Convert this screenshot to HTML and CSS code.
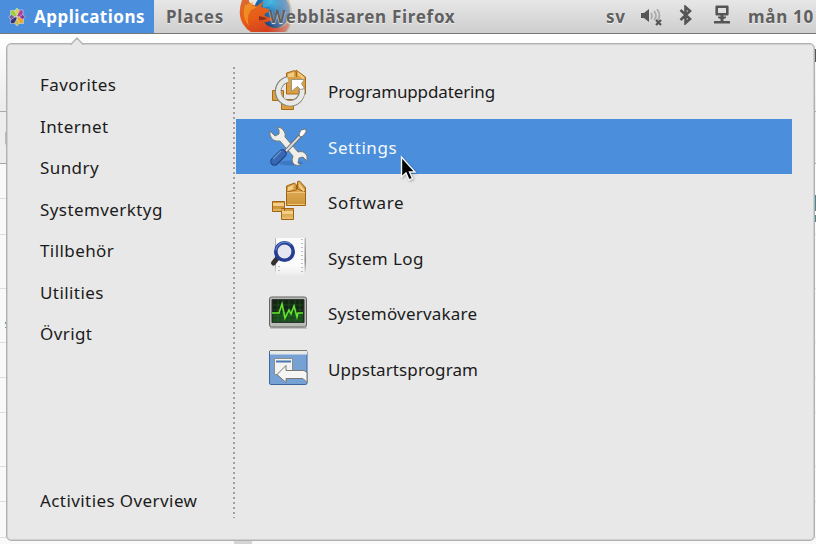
FILE: index.html
```html
<!DOCTYPE html>
<html lang="sv">
<head>
<meta charset="utf-8">
<title>Applications</title>
<link rel="stylesheet" href="styles.css">
</head>
<body>
<div class="desktop">
  <header class="panel">
    <div class="panel-item active">
      <svg class="distro" width="18" height="20" viewBox="0 0 18 20">
        <g stroke="#dfe8f5" stroke-width=".5">
          <path fill="#b23d99" d="M9 10V3h6v7z"/><path fill="#a1cd38" d="M2.500 3.500H9V10H2.500z"/>
          <path fill="#38307d" d="M2.500 10H9v6.500H2.500z"/><path fill="#efa724" d="M9 10h6.500v6.500H9z"/>
          <path fill="#d8d04c" d="M9 1l2.500 3L9 8 6.500 4z"/><path fill="#8d3d99" d="M17.500 10l-3 2.500L11 10l3.500-2.500z"/>
          <path fill="#c9bd48" d="M9 19l-2.500-3L9 12l2.500 4z"/><path fill="#7c5ca4" d="M.5 10l3-2.500L7 10l-3.500 2.500z"/>
        </g>
      </svg>
      <span>Applications</span>
    </div>
    <div class="panel-item places"><span>Places</span></div>
    <div class="window-item">
      <svg class="firefox" width="58" height="32" viewBox="0 0 58 32">
        <defs>
          <radialGradient id="globe" cx=".48" cy=".25" r=".7"><stop offset="0" stop-color="#2cb5e8"/><stop offset=".45" stop-color="#1b6db0"/><stop offset="1" stop-color="#17417d"/></radialGradient>
          <linearGradient id="fox" x1="0" x2=".6" y1="0" y2="1"><stop offset="0" stop-color="#d96b33"/><stop offset=".5" stop-color="#e85e17"/><stop offset="1" stop-color="#cf3c20"/></linearGradient>
          <linearGradient id="fade"><stop offset=".5" stop-color="#fff"/><stop offset="1" stop-color="#fff" stop-opacity=".25"/></linearGradient>
          <mask id="fademask"><path fill="url(#fade)" d="M0 0h58v33H0z"/></mask>
        </defs>
        <g mask="url(#fademask)">
          <path fill="#a99b6d" d="M40 0h10q4 9 3 19-1 8-5 13H25z"/>
          <circle cx="33" cy="11" r="18" fill="url(#globe)"/>
          <path fill="#4eb7dc" d="M24 0h10l-4 6-6 2z" opacity=".6"/>
          <path fill="url(#fox)" d="M3 0Q-2 14 4 24q3 5 8 8h34q5-5 5-12-6 8-13 8-9 0-13-6 5 1 9-3l-8-3q-2-2 3-4l1-3q-5-1-8-2l3-6-7 5Q9 4 10 0z"/>
          <path fill="#f49a25" d="M6 5q-4 12 4 21-3-9 2-16l6-3-5-1 1-4z" opacity=".75"/>
          <path fill="#8c321b" d="M20 16l8 2q-3 3-8 2z"/>
        </g>
      </svg>
      <span>Webbläsaren Firefox</span>
    </div>
    <div class="status">
      <span class="lang">sv</span>
      <svg class="volume" width="22" height="20" viewBox="0 0 22 20">
        <path fill="#555" d="M0 4h3l5-4v13L3 9H0z"/>
        <path fill="none" stroke="#aaa" stroke-width="1.800" d="M10 4q2 3 0 6M13 2q4 5 0 9M16 0q5 7 0 12"/>
        <path stroke="#555" stroke-width="2.200" d="M15 11l5 5M20 11l-5 5"/>
      </svg>
      <svg class="bluetooth" width="14" height="20" viewBox="0 0 14 20">
        <path fill="none" stroke="#555" stroke-width="2.600" d="M1.500 5l9.500 9-4.500 4V2L11 6l-9.500 9"/>
      </svg>
      <svg class="network" width="16" height="20" viewBox="0 0 16 20">
        <path fill="none" stroke="#555" stroke-width="2.600" stroke-linejoin="round" d="M2.700 1.800h10.600v7.400H2.700z"/>
        <path fill="#555" d="M4 11.500h8V13L9.500 14v2H16v2.500H0V16h6.500v-2L4 13zM6.500 9h3v3h-3z"/>
      </svg>
      <span class="clock">mån 10</span>
    </div>
  </header>

  <main class="window">
    <div class="row toolbar"></div>
    <div class="row tabs"><i class="knob"></i></div>
    <div class="row short"></div><div class="row short"></div><div class="row tall"></div>
    <div class="row tall"><i class="mark"></i></div><div class="row short"></div><div class="row short"></div>
    <div class="row tall"></div><div class="row short"></div><div class="row short"></div>
    <div class="row last"></div>
    <i class="stub stub-dark"></i><i class="stub stub-blue"></i><i class="stub stub-blue2"></i><i class="stub-bottom"></i>
  </main>

  <section class="menu">
    <svg class="menu-arrow" width="16" height="8" viewBox="0 0 16 8"><path fill="#e8e8e8" d="M1 8l7-7 7 7z"/><path fill="none" stroke="#b7b8b6" stroke-width="1.500" d="M1 7.300h1L8 1l6 6.300h1"/></svg>
    <nav class="categories">
      <span>Favorites</span>
      <span>Internet</span>
      <span>Sundry</span>
      <span>Systemverktyg</span>
      <span>Tillbehör</span>
      <span>Utilities</span>
      <span>Övrigt</span>
      <span class="overview">Activities Overview</span>
    </nav>
    <div class="divider"></div>
    <div class="apps">
      <div class="app">
        <svg width="44" height="44" viewBox="0 0 44 44">
          <g fill="#dca044" stroke="#a96a15"><path d="M5.500 21.500h11v10h-11zM14.500 30.500h12v10h-12z"/><path d="M19.500 4l8-2.500 2 2V8l-.5-7 9.500 7v17h-19z"/></g>
          <path fill="#f1cb82" d="M21 5l6-2v5h-6zM31 3l6 5v3l-6-5z"/>
          <path fill="none" stroke="#85857c" stroke-width="6.500" d="M21 10.500A12 12 0 1 0 34.500 19"/>
          <path fill="none" stroke="#e8e8e6" stroke-width="4.600" d="M21 10.500A12 12 0 1 0 34.500 18"/>
          <path fill="#fff" stroke="#969688" d="M24.500 10.500h13l-3 4 3 5-4 1-3-3-6 5z"/>
        </svg>
        <span class="a-pro">Programuppdatering</span>
      </div>
      <div class="app selected">
        <svg width="44" height="44" viewBox="0 0 44 44">
          <ellipse cx="24" cy="38" rx="12" ry="2.500" fill="#285995" opacity=".4"/>
          <path fill="#eeeeec" stroke="#777a75" d="M10 2q5 0 7 4 2 3 1 6l13 15q6-2 9 4v5l-4-4-4 1-1 5 3 2q-8 2-9-5l1-4L13 16q-8 1-10-6V6l5 5 4-2V5z"/>
          <path stroke="#666" stroke-width="3.800" d="M18 27L34 10"/><path stroke="#ddd" stroke-width="2" d="M18 27L34 10"/>
          <path fill="#fff" stroke="#777" d="M32 9l2-4 5-1v3l-3 4-3 1z"/>
          <path fill="none" stroke="#1c3c78" stroke-width="8.500" stroke-linecap="round" d="M7.500 36.500l8-8"/><path fill="none" stroke="#3768b4" stroke-width="6.500" stroke-linecap="round" d="M7.500 36.500l8-8"/><path stroke="#6d93cd" stroke-width="1.500" d="M6 34l8-8"/>
        </svg>
        <span class="a-set">Settings</span>
      </div>
      <div class="app">
        <svg width="44" height="44" viewBox="0 0 44 44">
          <defs><linearGradient id="box" x2="0" y2="1"><stop offset="0" stop-color="#e0ad58"/><stop offset=".6" stop-color="#cb9338"/><stop offset="1" stop-color="#e6b866"/></linearGradient></defs>
          <g fill="url(#box)" stroke="#a06312"><path d="M5.500 21.500h12v10h-12zM14.500 28.500h12v11h-12zM19.500 7.500h19v18h-19z"/><path d="M19.500 12V6l8-3 2 2v5zM30.500 9V1.500l2-.5 6 6.500V12z"/></g>
          <path fill="#f4ce87" d="M6 23h11v3H6zM15 31h11v3H15zM21 7l6-2-1 4-5 2zM32 3l5 6v3l-5-5z"/>
          <path stroke="#efc578" d="M20 12.500h18M20.500 24.500h17M6 30h11M15 38h11"/>
        </svg>
        <span class="a-sof">Software</span>
      </div>
      <div class="app">
        <svg width="44" height="44" viewBox="0 0 44 44">
          <defs><linearGradient id="sheet" x2="0" y2="1"><stop offset=".75" stop-color="#fbfbfb"/><stop offset="1" stop-color="#ececec"/></linearGradient><linearGradient id="edge" x2="0" y2="1"><stop offset="0" stop-color="#bbb"/><stop offset=".65" stop-color="#888"/><stop offset="1" stop-color="#e6e6e6"/></linearGradient></defs>
          <path fill="url(#edge)" d="M8 2h31v35H8z"/><path fill="url(#sheet)" d="M9 2h28.500v37H9z"/>
          <path stroke="#aaa" stroke-width="1.500" stroke-dasharray="1 3" d="M35 3v33M12 30v7"/>
          <path stroke="#333" stroke-width="5" stroke-linecap="round" d="M6.500 27l4-5"/>
          <circle cx="17.500" cy="15.500" r="8.700" fill="#e2e3ed" fill-opacity=".9" stroke="#263e91" stroke-width="3.600"/>
          <path fill="none" stroke="#6383cd" stroke-width="1.200" d="M9 14.500a9 9 0 0 1 15-6"/>
        </svg>
        <span class="a-log">System Log</span>
      </div>
      <div class="app">
        <svg width="44" height="44" viewBox="0 0 44 44">
          <path fill="#aaa" d="M3 36h37v2H3z" opacity=".6"/>
          <rect x="2.500" y="6" width="37" height="30" rx="2" fill="#b9bbb6" stroke="#63655f"/>
          <path fill="#122613" stroke="#333" d="M5 8.500h32v23H5z"/><path fill="#154c18" d="M6 21h30v10H6z"/>
          <path stroke="#30652c" stroke-width=".5" d="M6 14h30M6 19h30M6 25h30M6 29h30M11 9v22M16 9v22M22 9v22M28 9v22M33 9v22"/>
          <path fill="none" stroke="#63e432" stroke-width="1.600" d="M5 22h7l3-9 3 14 4-8 2 4 3-8 3 11 1-4h5"/>
        </svg>
        <span class="a-ove">Systemövervakare</span>
      </div>
      <div class="app">
        <svg width="44" height="44" viewBox="0 0 44 44">
          <rect x="2.500" y="3.500" width="37.500" height="34" rx="1.500" fill="#76a1d5" stroke="#3c659f"/>
          <path fill="#e9e9e7" d="M3 3h37v4.500H3z"/><path stroke="#77786f" d="M3 3.500h37"/>
          <path fill="#f3f3f1" stroke="#8b8d88" d="M7.500 11.500h18v16h-18z"/><path stroke="#4677b1" stroke-width="2" d="M9 14.500h15"/>
          <path fill="#f5f5f3" stroke="#777973" d="M10 27.500l9-9v5h18l3 2v10l-4-4H19v4z"/>
        </svg>
        <span class="a-upp">Uppstartsprogram</span>
      </div>
    </div>
  </section>

  <svg class="pointer" width="20" height="28" viewBox="0 0 20 28"><path fill="#000" stroke="#f5f5f5" stroke-width="1.400" d="M1.500 2v20l4.500-4 3 7 3.500-1.500-3-6.500H15z"/></svg>
</div>
</body>
</html>
```
FILE: styles.css
```css
* { box-sizing: border-box; }
body { margin: 0; font-family: "Noto Sans", "Open Sans", sans-serif; font-size: 17px; color: #1b1b1b; }
svg { display: block; flex: none; }
span { white-space: nowrap; }
.desktop { position: relative; width: 816px; height: 544px; overflow: hidden; display: flex; flex-direction: column; background: #f9f9f9; }

.panel { height: 34px; flex: none; display: flex; background: linear-gradient(#e7e7e7, #cecece); border-bottom: 1px solid #777; color: #606060; font-size: 17px; font-weight: 700; line-height: 33px; text-shadow: 0 1px 1px #f2f2f2; letter-spacing: .7px; }
.panel-item { display: flex; align-items: center; }
.active { width: 154px; padding-left: 8px; gap: 8px; background: #4a8edc; color: #fff; text-shadow: none; letter-spacing: .5px; }
.places { padding-left: 12px; width: 85px; letter-spacing: .8px; }
.window-item { display: flex; }
.firefox { margin-right: -28px; }
.window-item span { position: relative; }
.status { margin-left: auto; width: 210px; flex: none; display: flex; align-items: flex-start; }
.lang { width: 35px; }
.volume { margin: 9px 16px 0 0; }
.bluetooth { margin: 5px 21px 0 0; }
.network { margin: 5px 18px 0 0; }

.window { flex: 1; display: flex; flex-direction: column; position: relative; }
.row { flex: none; border-bottom: 1px solid #dedede; }
.toolbar { height: 78px; background: linear-gradient(#fff, #ebebeb); border-color: #aaa; }
.tabs { height: 52px; background: #ededed; border-color: #a5a5a5; display: flex; align-items: center; }
.short { height: 35.300px; }
.tall { height: 54px; display: flex; align-items: center; }
.last { border: 0; }
.knob { width: 4px; height: 14px; margin-left: 5px; border-radius: 3px; background: #b3bbc1; }
.mark { width: 3px; height: 6px; margin: 20px 0 0 5px; border-top: 2px solid #5ca2b3; border-bottom: 1px solid #5ca2b3; }
.stub { position: absolute; right: 0; width: 1px; }
.stub-dark { top: 15px; height: 13px; background: #555; }
.stub-blue { top: 161px; height: 16px; background: #4b8396; }
.stub-blue2 { top: 181px; height: 7px; background: #4b8396; }
.stub-bottom { position: absolute; left: 234px; bottom: 0; width: 18px; height: 4px; background: #d5d5d5; }

.menu { position: absolute; left: 6px; top: 43px; width: 809px; height: 498px; display: flex; padding: 19px 22px 22px 33px; background: #e8e8e8; border: 1px solid #b2b3b1; box-shadow: inset 0 0 0 1px #cfd0ce; border-radius: 5px; }
.menu-arrow { position: absolute; left: 62px; top: -7px; }
.categories { width: 193px; flex: none; display: flex; flex-direction: column; padding-top: 1px; line-height: 41.500px; letter-spacing: .42px; }
.categories span { display: block; }
.categories .overview { margin-top: auto; margin-bottom: -3px; }
.divider { width: 2px; height: 451px; margin: 4px 1px 0 0; background: repeating-linear-gradient(#a0a0a0 0 2px, transparent 2px 5px); flex: none; }
.apps { flex: 1; }
.app { height: 55.500px; padding: 1px 0 0 31px; display: flex; align-items: center; gap: 17px; }
.app span { padding-top: 1px; }
.selected { background: #4a8edc; color: #f6f9fc; }
.a-pro { letter-spacing: -.13px; }
.a-set { letter-spacing: .55px; }
.a-sof { letter-spacing: .7px; }
.a-log { letter-spacing: .4px; }
.a-ove { letter-spacing: .2px; }
.a-upp { letter-spacing: .1px; }
.pointer { position: absolute; left: 400px; top: 155px; filter: drop-shadow(1px 1px 1px #0004); }
```
